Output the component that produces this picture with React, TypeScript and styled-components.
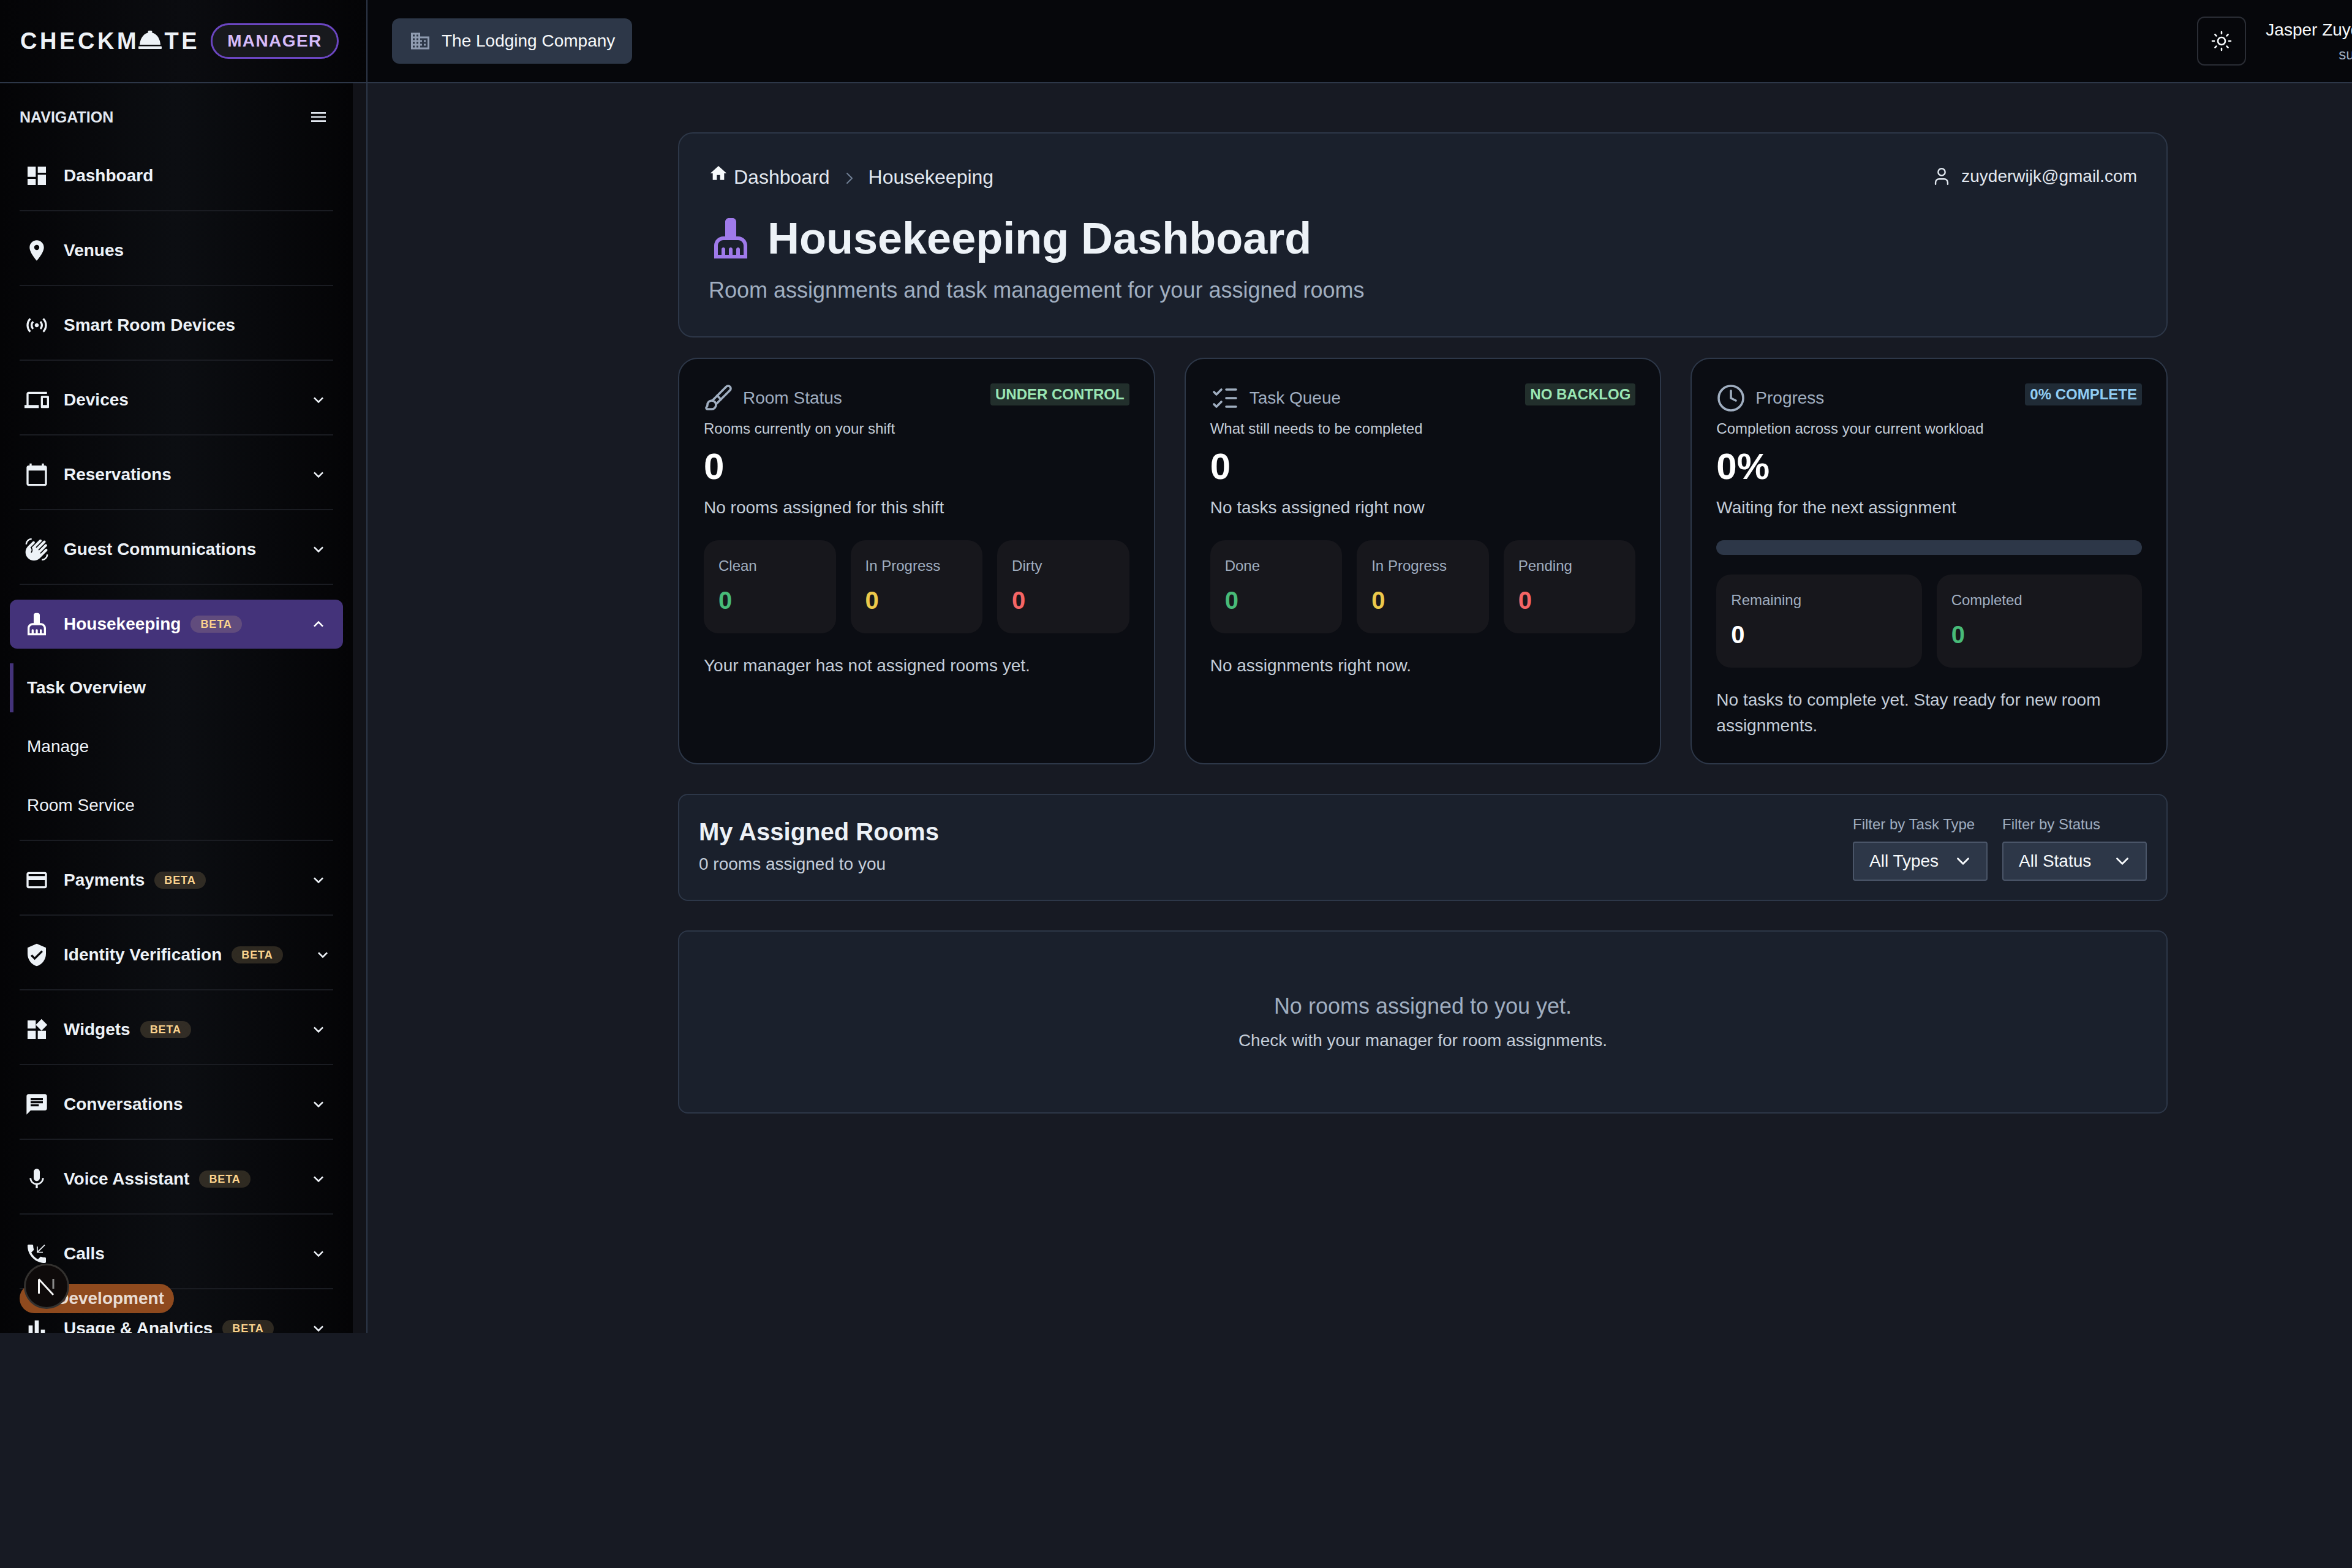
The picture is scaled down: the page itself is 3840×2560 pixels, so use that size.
import React from 'react';
import styled, { createGlobalStyle } from 'styled-components';
import { Brush, ChevronDown, ChevronRight, Clock, ListChecks, Sun, User } from 'lucide-react';
import {
  MdBarChart,
  MdBusiness,
  MdCalendarToday,
  MdChat,
  MdCleaningServices,
  MdDashboard,
  MdDevices,
  MdExpandLess,
  MdExpandMore,
  MdHome,
  MdLocationOn,
  MdMenu,
  MdMic,
  MdPayment,
  MdPhoneCallback,
  MdSensors,
  MdVerifiedUser,
  MdWavingHand,
  MdWidgets,
} from 'react-icons/md';

const GlobalStyle = createGlobalStyle`
  html, body {
    margin: 0;
    padding: 0;
    overflow: hidden;
    background: #171a23;
    font-family: "Liberation Sans", Arial, sans-serif;
  }
  * {
    box-sizing: border-box;
  }
`;

const Frame = styled.div`
  position: relative;
  width: 3840px;
  height: 2176px;
  overflow: hidden;
  display: flex;
  flex-direction: column;
`;

const TopBar = styled.header`
  display: flex;
  flex: 0 0 136px;
  height: 136px;
  background: #06070b;
  border-bottom: 2px solid #2d3748;
`;

const LogoArea = styled.div`
  flex: 0 0 600px;
  display: flex;
  align-items: center;
  padding-left: 33px;
  background: linear-gradient(90deg, #040406, #0b0c10 50%, #040406);
  border-right: 2px solid #2d3748;
`;

const Logo = styled.div`
  display: flex;
  align-items: center;
  font-size: 38px;
  font-weight: 700;
  letter-spacing: 4.6px;
  color: #edf2f7;
  line-height: 1;

  svg {
    margin: -5px 4px 0 -1px;
  }
`;

const RoleBadge = styled.span`
  margin-left: 18px;
  height: 58px;
  padding: 0 24px;
  display: flex;
  align-items: center;
  border: 3px solid #6b46c1;
  border-radius: 29px;
  background: #18191d;
  color: #d6bcfa;
  font-size: 28px;
  font-weight: 700;
  letter-spacing: 1.4px;
`;

const TopBarBody = styled.div`
  flex: 1;
  display: flex;
  align-items: center;
  justify-content: space-between;
  padding-left: 40px;
  margin-right: -85px;
`;

const OrgButton = styled.div`
  height: 74px;
  padding: 0 28px;
  display: flex;
  align-items: center;
  gap: 17px;
  border-radius: 12px;
  background: #2d3748;
  color: #f7fafc;
  font-size: 28px;

  svg {
    color: #8f9bb0;
  }
`;

const UserCluster = styled.div`
  display: flex;
  align-items: center;
  gap: 32px;
`;

const ThemeButton = styled.div`
  width: 80px;
  height: 80px;
  display: flex;
  align-items: center;
  justify-content: center;
  border: 2px solid #2a2d35;
  border-radius: 12px;
  color: #f7fafc;
`;

const UserBlock = styled.div`
  flex-shrink: 0;
  text-align: right;
`;

const UserName = styled.div`
  font-size: 28px;
  line-height: 44px;
  color: #f7fafc;
`;

const UserRole = styled.div`
  font-size: 24px;
  line-height: 36px;
  color: #a0aec0;
`;

const Body = styled.div`
  flex: 1;
  min-height: 0;
  display: flex;
`;

const Sidebar = styled.aside`
  flex: 0 0 600px;
  display: flex;
  background: #121319;
  border-right: 2px solid #2d3748;
  overflow: hidden;
`;

const SidebarScroll = styled.div`
  width: 576px;
  padding: 39px 32px 0;
  background: linear-gradient(90deg, #040406, #0c0e12 50%, #040406);
`;

const NavHeader = styled.div`
  height: 32px;
  margin-bottom: 40px;
  display: flex;
  align-items: center;
  justify-content: space-between;
  padding-right: 8px;
  font-size: 25px;
  font-weight: 700;
  color: #e2e8f0;
`;

const NavGroup = styled.div`
  padding-bottom: 16px;
  margin-bottom: 24px;
  border-bottom: 2px solid #1a1c22;
`;

const NavItem = styled.div<{ $active?: boolean; $wide?: boolean }>`
  height: 80px;
  margin: 0 -16px;
  padding: 0 ${(p) => (p.$wide ? 1 : 8)}px 0 24px;
  display: flex;
  align-items: center;
  border-radius: 12px;
  color: ${(p) => (p.$active ? '#ffffff' : '#edf2f7')};
  background: ${(p) => (p.$active ? '#44337a' : 'transparent')};
  font-size: 28px;
  font-weight: 700;
`;

const NavIcon = styled.span`
  flex: 0 0 40px;
  height: 40px;
  margin-right: 24px;
  display: flex;
  align-items: center;
  justify-content: center;
`;

const NavLabel = styled.span`
  white-space: nowrap;
`;

const BetaTag = styled.span`
  margin-left: 16px;
  height: 28px;
  padding: 0 16px;
  display: flex;
  align-items: center;
  border-radius: 14px;
  background: rgba(251, 211, 141, 0.16);
  color: #fbd38d;
  font-size: 18px;
  letter-spacing: 0.9px;
  font-weight: 700;
`;

const Chevron = styled.span`
  margin-left: auto;
  margin-right: 16px;
  display: flex;
`;

const SubItem = styled.div<{ $active?: boolean }>`
  height: 80px;
  margin: 16px -16px 0;
  padding-left: 22px;
  display: flex;
  align-items: center;
  border-left: 6px solid ${(p) => (p.$active ? '#44337a' : 'transparent')};
  color: #edf2f7;
  font-size: 28px;
  font-weight: ${(p) => (p.$active ? 700 : 400)};

  ${NavItem} + & {
    margin-top: 24px;
  }
`;

const Main = styled.main`
  flex: 1;
  padding: 80px 0 0 507px;
`;

const Content = styled.div`
  width: 2432px;
  display: flex;
  flex-direction: column;
`;

const HeaderCard = styled.section`
  height: 335px;
  padding: 48px;
  background: #1a202c;
  border: 2px solid #2d3748;
  border-radius: 24px;
`;

const HeaderTop = styled.div`
  height: 46px;
  display: flex;
  align-items: center;
  justify-content: space-between;
`;

const Breadcrumb = styled.nav`
  display: flex;
  align-items: center;
  font-size: 32px;
  color: #e2e8f0;

  > svg:first-child {
    margin: -12px 9px 0 0;
    color: #f7fafc;
  }
`;

const CrumbSeparator = styled(ChevronRight)`
  margin: 4px 15px 0 16px;
  color: #718096;
`;

const Email = styled.div`
  margin-top: -3px;
  display: flex;
  align-items: center;
  gap: 15px;
  font-size: 28px;
  color: #e2e8f0;
`;

const TitleRow = styled.h1`
  margin: 34px 0 0;
  height: 86px;
  display: flex;
  align-items: center;
  gap: 24px;
  font-size: 72px;
  line-height: 86px;
  font-weight: 700;
  color: #edf2f7;

  svg {
    color: #9f7aea;
  }
`;

const Subtitle = styled.p`
  margin: 15px 0 0;
  font-size: 36px;
  line-height: 54px;
  color: #a0aec0;
`;

const CardGrid = styled.div`
  margin-top: 33px;
  display: grid;
  grid-template-columns: repeat(3, 1fr);
  gap: 48px;
`;

const StatCard = styled.section`
  padding: 40px;
  background: #0b0d13;
  border: 2px solid #2d3748;
  border-radius: 32px;
`;

const CardHead = styled.div`
  height: 48px;
  display: flex;
  align-items: flex-start;
  justify-content: space-between;
`;

const CardTitle = styled.div`
  display: flex;
  align-items: center;
  gap: 16px;
  font-size: 28px;
  line-height: 48px;
  color: #a0aec0;
`;

const CardTag = styled.span<{ $tone: 'green' | 'blue' }>`
  height: 36px;
  padding: 0 8px;
  display: flex;
  align-items: center;
  border-radius: 4px;
  font-size: 24px;
  font-weight: 700;
  color: ${(p) => (p.$tone === 'green' ? '#9ae6b4' : '#90cdf4')};
  background: ${(p) => (p.$tone === 'green' ? 'rgba(154, 230, 180, 0.16)' : 'rgba(144, 205, 244, 0.16)')};
`;

const CardCaption = styled.div`
  margin-top: 8px;
  font-size: 24px;
  line-height: 36px;
  color: #c4cdd9;
`;

const CardValue = styled.div`
  margin-top: 10px;
  font-size: 60px;
  line-height: 67px;
  font-weight: 700;
  color: #ffffff;
`;

const CardText = styled.div<{ $top: number }>`
  margin-top: ${(p) => p.$top}px;
  font-size: 28px;
  line-height: 42px;
  color: #c4cdd9;
`;

const SubGrid = styled.div<{ $cols: number }>`
  margin-top: 32px;
  display: grid;
  grid-template-columns: repeat(${(p) => p.$cols}, 1fr);
  gap: 24px;
`;

const SubStat = styled.div`
  height: 152px;
  padding: 24px;
  background: #17171c;
  border-radius: 24px;
`;

const SubLabel = styled.div`
  font-size: 24px;
  line-height: 36px;
  color: #a0aec0;
`;

const SubValue = styled.div<{ $color: string }>`
  margin-top: 15px;
  font-size: 40px;
  line-height: 46px;
  font-weight: 700;
  color: ${(p) => p.$color};
`;

const ProgressTrack = styled.div`
  margin-top: 32px;
  height: 24px;
  border-radius: 12px;
  background: #2d3748;
`;

const FilterCard = styled.section`
  margin-top: 48px;
  height: 175px;
  padding: 0 32px;
  display: flex;
  align-items: center;
  justify-content: space-between;
  background: #1a202c;
  border: 2px solid #2d3748;
  border-radius: 16px;
`;

const FilterHeading = styled.div`
  margin-top: -3px;
`;

const FilterTitle = styled.h2`
  margin: 0;
  font-size: 40px;
  line-height: 52px;
  font-weight: 700;
  color: #edf2f7;
`;

const FilterCount = styled.div`
  margin-top: 6px;
  font-size: 28px;
  line-height: 42px;
  color: #c4cdd9;
`;

const Filters = styled.div`
  display: flex;
  gap: 24px;
`;

const FilterLabel = styled.div`
  margin-top: -2px;
  margin-bottom: 10px;
  font-size: 24px;
  line-height: 36px;
  color: #a0aec0;
`;

const SelectBox = styled.div<{ $width: number }>`
  width: ${(p) => p.$width}px;
  height: 64px;
  padding: 0 21px 0 25px;
  display: flex;
  align-items: center;
  justify-content: space-between;
  background: #2d3748;
  border: 2px solid #4a5568;
  border-radius: 4px;
  color: #f7fafc;
  font-size: 28px;
`;

const EmptyCard = styled.section`
  margin-top: 48px;
  height: 299px;
  padding-top: 2px;
  display: flex;
  flex-direction: column;
  align-items: center;
  justify-content: center;
  gap: 14px;
  background: #1a202c;
  border: 2px solid #2d3748;
  border-radius: 16px;
`;

const EmptyTitle = styled.div`
  font-size: 36px;
  line-height: 44px;
  color: #a0aec0;
`;

const EmptyHint = styled.div`
  font-size: 28px;
  line-height: 40px;
  color: #c4cdd9;
`;

const DevPill = styled.div`
  position: absolute;
  left: 32px;
  top: 2096px;
  width: 252px;
  height: 48px;
  padding-right: 16px;
  display: flex;
  align-items: center;
  justify-content: flex-end;
  border-radius: 24px;
  background: #8f4a1e;
  color: #e8dcd3;
  font-size: 28px;
  font-weight: 700;
`;

const DevCircle = styled.div`
  position: absolute;
  left: 39px;
  top: 2063px;
  width: 74px;
  height: 74px;
  display: flex;
  align-items: center;
  justify-content: center;
  border-radius: 50%;
  background: #0e0a0a;
  border: 3px solid #33312f;
`;

const BellMark = () => (
  <svg width="38" height="30" viewBox="0 0 38 30" fill="#edf2f7">
    <rect x="15.5" y="0" width="7" height="4" rx="2" />
    <path d="M2 23C3 11 10 3 19 3s16 8 17 20z" />
    <rect x="0" y="25.5" width="38" height="4.5" rx="1" />
  </svg>
);

const NextMark = () => (
  <svg width="34" height="34" viewBox="0 0 34 34" fill="none">
    <path d="M4.5 29V5.5" stroke="#f5f5f5" strokeWidth="3" />
    <path d="M4.5 5.5L28 31" stroke="#f5f5f5" strokeWidth="3" />
    <path d="M28 5v16" stroke="#8a8a8a" strokeWidth="3" />
  </svg>
);

type NavEntry = {
  label: string;
  icon: React.ReactNode;
  beta?: boolean;
  chevron?: boolean;
  wide?: boolean;
};

const beforeHousekeeping: NavEntry[] = [
  { label: 'Dashboard', icon: <MdDashboard size={40} /> },
  { label: 'Venues', icon: <MdLocationOn size={40} /> },
  { label: 'Smart Room Devices', icon: <MdSensors size={40} /> },
  { label: 'Devices', icon: <MdDevices size={40} />, chevron: true },
  { label: 'Reservations', icon: <MdCalendarToday size={40} />, chevron: true },
  { label: 'Guest Communications', icon: <MdWavingHand size={40} />, chevron: true },
];

const afterHousekeeping: NavEntry[] = [
  { label: 'Payments', icon: <MdPayment size={40} />, beta: true, chevron: true },
  { label: 'Identity Verification', icon: <MdVerifiedUser size={40} />, beta: true, chevron: true, wide: true },
  { label: 'Widgets', icon: <MdWidgets size={40} />, beta: true, chevron: true },
  { label: 'Conversations', icon: <MdChat size={40} />, chevron: true },
  { label: 'Voice Assistant', icon: <MdMic size={40} />, beta: true, chevron: true },
  { label: 'Calls', icon: <MdPhoneCallback size={40} />, chevron: true },
  { label: 'Usage & Analytics', icon: <MdBarChart size={40} />, beta: true, chevron: true },
];

const NavRow = ({ entry }: { entry: NavEntry }) => (
  <NavGroup>
    <NavItem $wide={entry.wide}>
      <NavIcon>{entry.icon}</NavIcon>
      <NavLabel>{entry.label}</NavLabel>
      {entry.beta && <BetaTag>BETA</BetaTag>}
      {entry.chevron && (
        <Chevron>
          <MdExpandMore size={32} />
        </Chevron>
      )}
    </NavItem>
  </NavGroup>
);

const green = '#48bb78';
const yellow = '#ecc94b';
const red = '#f56565';

const Stat = ({ label, color }: { label: string; color: string }) => (
  <SubStat>
    <SubLabel>{label}</SubLabel>
    <SubValue $color={color}>0</SubValue>
  </SubStat>
);

const App = () => (
  <>
    <GlobalStyle />
    <Frame>
      <TopBar>
        <LogoArea>
          <Logo>
            CHECKM
            <BellMark />
            TE
          </Logo>
          <RoleBadge>MANAGER</RoleBadge>
        </LogoArea>
        <TopBarBody>
          <OrgButton>
            <MdBusiness size={36} />
            The Lodging Company
          </OrgButton>
          <UserCluster>
            <ThemeButton>
              <Sun size={36} strokeWidth={1.7} />
            </ThemeButton>
            <UserBlock>
              <UserName>Jasper Zuyderwijk</UserName>
              <UserRole>superuser</UserRole>
            </UserBlock>
          </UserCluster>
        </TopBarBody>
      </TopBar>
      <Body>
        <Sidebar>
          <SidebarScroll>
            <NavHeader>
              NAVIGATION
              <MdMenu size={32} />
            </NavHeader>
            {beforeHousekeeping.map((entry) => (
              <NavRow key={entry.label} entry={entry} />
            ))}
            <NavGroup>
              <NavItem $active>
                <NavIcon>
                  <MdCleaningServices size={40} />
                </NavIcon>
                <NavLabel>Housekeeping</NavLabel>
                <BetaTag>BETA</BetaTag>
                <Chevron>
                  <MdExpandLess size={32} />
                </Chevron>
              </NavItem>
              <SubItem $active>Task Overview</SubItem>
              <SubItem>Manage</SubItem>
              <SubItem>Room Service</SubItem>
            </NavGroup>
            {afterHousekeeping.map((entry) => (
              <NavRow key={entry.label} entry={entry} />
            ))}
          </SidebarScroll>
        </Sidebar>
        <Main>
          <Content>
            <HeaderCard>
              <HeaderTop>
                <Breadcrumb>
                  <MdHome size={32} />
                  Dashboard
                  <CrumbSeparator size={32} strokeWidth={1.5} />
                  Housekeeping
                </Breadcrumb>
                <Email>
                  <User size={34} strokeWidth={1.7} />
                  zuyderwijk@gmail.com
                </Email>
              </HeaderTop>
              <TitleRow>
                <MdCleaningServices size={72} />
                Housekeeping Dashboard
              </TitleRow>
              <Subtitle>Room assignments and task management for your assigned rooms</Subtitle>
            </HeaderCard>
            <CardGrid>
              <StatCard>
                <CardHead>
                  <CardTitle>
                    <Brush size={48} strokeWidth={1.8} />
                    Room Status
                  </CardTitle>
                  <CardTag $tone="green">UNDER CONTROL</CardTag>
                </CardHead>
                <CardCaption>Rooms currently on your shift</CardCaption>
                <CardValue>0</CardValue>
                <CardText $top={13}>No rooms assigned for this shift</CardText>
                <SubGrid $cols={3}>
                  <Stat label="Clean" color={green} />
                  <Stat label="In Progress" color={yellow} />
                  <Stat label="Dirty" color={red} />
                </SubGrid>
                <CardText $top={32}>Your manager has not assigned rooms yet.</CardText>
              </StatCard>
              <StatCard>
                <CardHead>
                  <CardTitle>
                    <ListChecks size={48} strokeWidth={1.8} />
                    Task Queue
                  </CardTitle>
                  <CardTag $tone="green">NO BACKLOG</CardTag>
                </CardHead>
                <CardCaption>What still needs to be completed</CardCaption>
                <CardValue>0</CardValue>
                <CardText $top={13}>No tasks assigned right now</CardText>
                <SubGrid $cols={3}>
                  <Stat label="Done" color={green} />
                  <Stat label="In Progress" color={yellow} />
                  <Stat label="Pending" color={red} />
                </SubGrid>
                <CardText $top={32}>No assignments right now.</CardText>
              </StatCard>
              <StatCard>
                <CardHead>
                  <CardTitle>
                    <Clock size={48} strokeWidth={1.8} />
                    Progress
                  </CardTitle>
                  <CardTag $tone="blue">0% COMPLETE</CardTag>
                </CardHead>
                <CardCaption>Completion across your current workload</CardCaption>
                <CardValue>0%</CardValue>
                <CardText $top={13}>Waiting for the next assignment</CardText>
                <ProgressTrack />
                <SubGrid $cols={2}>
                  <Stat label="Remaining" color="#ffffff" />
                  <Stat label="Completed" color={green} />
                </SubGrid>
                <CardText $top={32}>No tasks to complete yet. Stay ready for new room assignments.</CardText>
              </StatCard>
            </CardGrid>
            <FilterCard>
              <FilterHeading>
                <FilterTitle>My Assigned Rooms</FilterTitle>
                <FilterCount>0 rooms assigned to you</FilterCount>
              </FilterHeading>
              <Filters>
                <div>
                  <FilterLabel>Filter by Task Type</FilterLabel>
                  <SelectBox $width={220}>
                    All Types
                    <ChevronDown size={34} />
                  </SelectBox>
                </div>
                <div>
                  <FilterLabel>Filter by Status</FilterLabel>
                  <SelectBox $width={236}>
                    All Status
                    <ChevronDown size={34} />
                  </SelectBox>
                </div>
              </Filters>
            </FilterCard>
            <EmptyCard>
              <EmptyTitle>No rooms assigned to you yet.</EmptyTitle>
              <EmptyHint>Check with your manager for room assignments.</EmptyHint>
            </EmptyCard>
          </Content>
        </Main>
      </Body>
      <DevPill>Development</DevPill>
      <DevCircle>
        <NextMark />
      </DevCircle>
    </Frame>
  </>
);

export default App;
